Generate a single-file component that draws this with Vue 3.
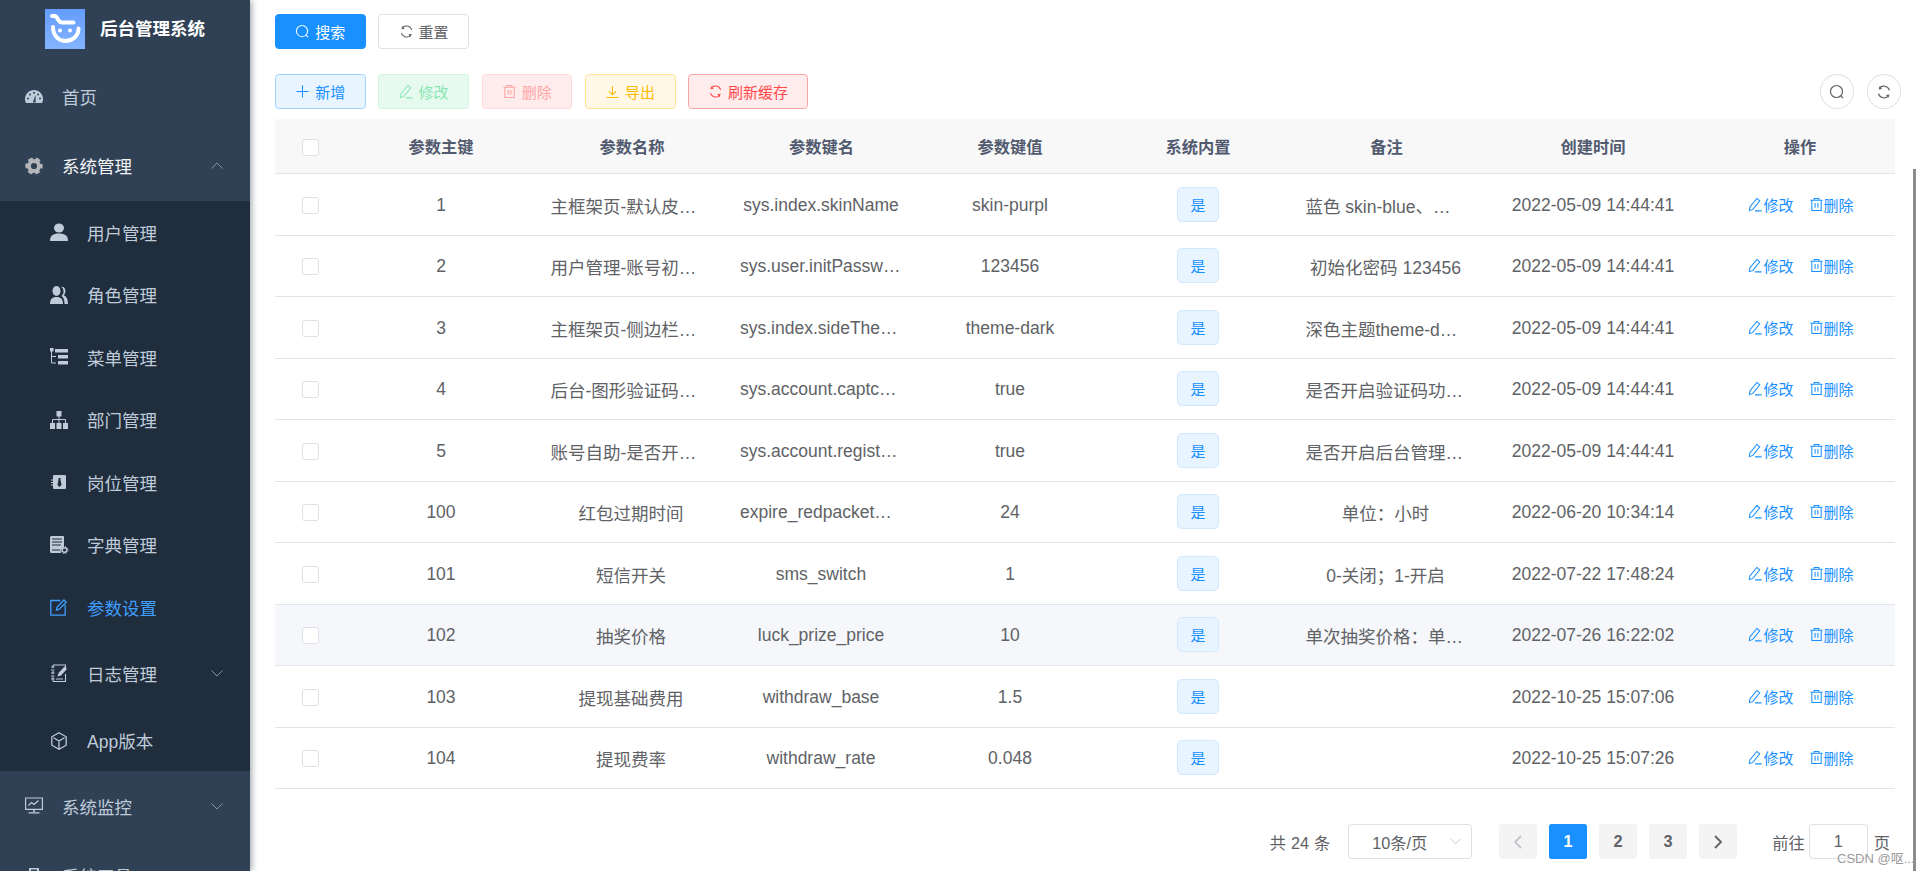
<script setup>
const BG = '#304156'
const DK = '#1f2d3d'
const icons = {
  dashboard: `<path fill="currentColor" d="M9 2C4 2 0 6 0 11c0 1.800.5 3 1.200 4h15.600c.7-1 1.200-2.200 1.200-4 0-5-4-9-9-9z"/><g fill="${BG}"><circle cx="3" cy="10.500" r="1"/><circle cx="5" cy="6.500" r="1"/><circle cx="9" cy="4.800" r="1"/><circle cx="13" cy="6.500" r="1"/><circle cx="15" cy="10.500" r="1"/><path d="M7.800 14.500 10.500 7l.2 7.500z"/></g>`,
  gear: `<circle cx="9" cy="9" r="5" fill="none" stroke="#b4b6b9" stroke-width="3.800"/><circle cx="9" cy="9" r="7.300" fill="none" stroke="#b4b6b9" stroke-width="2.800" stroke-dasharray="4.600 3.040" stroke-dashoffset="2.300"/>`,
  user: `<g fill="currentColor"><ellipse cx="9" cy="5" rx="5" ry="4.500"/><path d="M0 17.500c0-4.500 3-7 9-7s9 2.500 9 7c0 .3-.3.500-.6.500H.6c-.3 0-.6-.2-.6-.5z"/></g>`,
  peoples: `<g fill="currentColor"><ellipse cx="6.500" cy="5" rx="4" ry="5"/><path d="M0 18c0-4.500 2-7 6.500-7s6.500 2.500 6.500 7z"/><path d="M11 .8c2.500-.6 4.500 1.500 4.500 4.200 0 1.800-.8 3.200-1.800 4.300 2.500 1 4.300 3.700 4.300 8.700h-3.500c0-4-1-6.500-3-8 1.300-1.500 2.200-3 2-5-.1-1.800-1-3.200-2.500-4.200z"/></g>`,
  treeTable: `<g fill="currentColor"><rect x="0" y="0" width="3.500" height="3.500"/><rect x="5" y="1" width="13" height="3.500"/><rect x="8" y="7" width="10" height="3.500"/><rect x="8" y="13" width="10" height="3.500"/></g><path fill="none" stroke="currentColor" d="M1.500 3v12H6M1.500 8.500H6"/>`,
  tree: `<g fill="currentColor"><rect x="6.500" y="0" width="5" height="5.500"/><rect x="0" y="12" width="5" height="6"/><rect x="6.500" y="12" width="5" height="6"/><rect x="13" y="12" width="5" height="6"/></g><path fill="none" stroke="currentColor" d="M9 5v7M2.500 12V8.500h13V12"/>`,
  post: `<rect x="3" y="2" width="13" height="14" rx="1" fill="currentColor"/><path fill="${DK}" d="M8.500 5h2v1.500l1 5.500-2 2-2-2 1-5.500z"/><path fill="none" stroke="currentColor" d="M1 7h2M1 9.500h2M1 12h2"/>`,
  dict: `<path fill="currentColor" d="M1.500 0H13a1 1 0 0 1 1 1v10a5 5 0 0 0-3 6H1.500A1.500 1.500 0 0 1 0 15.500v-14A1.500 1.500 0 0 1 1.500 0z"/><path fill="none" stroke="${DK}" d="M2 3h10M2 6h10M2 9h9M2 14h8"/><circle cx="14.500" cy="14" r="2.300" fill="none" stroke="currentColor" stroke-width="1.400"/><circle cx="14.500" cy="14" r="3.500" fill="none" stroke="currentColor" stroke-dasharray="1.500 1.250"/>`,
  edit: `<path fill="none" stroke="currentColor" stroke-width="1.300" d="M10.500 2.500H.8v14.700h14.400V7M6.500 12l.6-3L14 2l2.200 2.200-7 7z"/>`,
  log: `<path fill="none" stroke="currentColor" stroke-width="1.100" d="M3 1h12.500v3M15.500 10v7.500H3M3 1v3M3 7v3M3 13v4.500M1 3h3.500M1 6h3.500M1 9h3.500M1 12h3.500M1 15h3.500"/><path fill="currentColor" d="M7.500 12.500l1-3.500 6-6.500 2.500 2.500-6 6.500zM6 14.500h7v1H6z"/>`,
  cube: `<path fill="none" stroke="currentColor" stroke-width="1.300" d="M9 .8l7.200 4v8.400L9 17.200l-7.200-4V4.800zM3.500 5.800 9 9l5.500-3.200M9 9v7.500"/>`,
  monitor: `<path fill="none" stroke="currentColor" stroke-width="1.200" d="M.6 1h16.800v11.400H.6zM3.500 8.500l3-3 2.500 2 4.500-4"/><path fill="currentColor" d="M8.200 12.500h1.600V15H8.200zM3.500 15.200h11v1.300h-11z"/>`,
  tool: `<path fill="currentColor" d="M4 2h10v3h4v13H0V5h4zm2 1.500V5h6V3.500z"/>`,
}
const top1 = [{ label: '首页', icon: 'dashboard' }]
const subs = [
  { label: '用户管理', icon: 'user' },
  { label: '角色管理', icon: 'peoples' },
  { label: '菜单管理', icon: 'treeTable' },
  { label: '部门管理', icon: 'tree' },
  { label: '岗位管理', icon: 'post' },
  { label: '字典管理', icon: 'dict' },
  { label: '参数设置', icon: 'edit', active: true },
]
const rows = [
  [1, '主框架页-默认皮肤样式名称', 'sys.index.skinName', 'skin-purpl', '蓝色 skin-blue、绿色 skin-green', '2022-05-09 14:44:41'],
  [2, '用户管理-账号初始密码', 'sys.user.initPassword', '123456', '初始化密码 123456', '2022-05-09 14:44:41'],
  [3, '主框架页-侧边栏主题', 'sys.index.sideTheme', 'theme-dark', '深色主题theme-dark，浅色主题theme-light', '2022-05-09 14:44:41'],
  [4, '后台-图形验证码功能开关', 'sys.account.captchaEnabled', 'true', '是否开启验证码功能（true开启）', '2022-05-09 14:44:41'],
  [5, '账号自助-是否开启用户注册功能', 'sys.account.registerUser', 'true', '是否开启后台管理用户注册功能', '2022-05-09 14:44:41'],
  [100, '红包过期时间', 'expire_redpacketMinutes', '24', '单位：小时', '2022-06-20 10:34:14'],
  [101, '短信开关', 'sms_switch', '1', '0-关闭；1-开启', '2022-07-22 17:48:24'],
  [102, '抽奖价格', 'luck_prize_price', '10', '单次抽奖价格：单位为元', '2022-07-26 16:22:02'],
  [103, '提现基础费用', 'withdraw_base', '1.5', '', '2022-10-25 15:07:06'],
  [104, '提现费率', 'withdraw_rate', '0.048', '', '2022-10-25 15:07:26'],
]
const heads = ['参数主键', '参数名称', '参数键名', '参数键值', '系统内置', '备注', '创建时间', '操作']
const colWidths = [70, 192, 190, 189, 188, 188, 189, 224, 190]
</script>

<template>
  <div class="app">
    <aside class="side">
      <div class="brand">
        <svg class="logo" viewBox="0 0 40 40" width="40" height="40">
          <defs>
            <linearGradient id="lg" x1="0" y1="0" x2="0" y2="1">
              <stop offset="0" stop-color="#649dff" />
              <stop offset="1" stop-color="#84b4ff" />
            </linearGradient>
          </defs>
          <rect width="40" height="40" fill="url(#lg)" />
          <path fill="none" stroke="#fff" stroke-width="4" stroke-linecap="round" d="M7 7h2.500c3.500 0 3 6.500 7.500 6.500h11.500" />
          <path fill="none" stroke="#fff" stroke-width="4" stroke-linecap="round" d="M8 18c0 8.500 5.500 14 12.500 14S33.500 27 33.500 19.500" />
          <circle cx="15" cy="21.500" r="2" fill="#fff" />
          <circle cx="25" cy="21.500" r="2" fill="#fff" />
        </svg>
        <span class="brand-name">后台管理系统</span>
      </div>
      <nav>
        <a v-for="m in top1" :key="m.label" class="item">
          <svg class="mi" viewBox="0 0 18 18" v-html="icons[m.icon]"></svg>
          <span>{{ m.label }}</span>
        </a>
        <a class="item open">
          <svg class="mi" viewBox="0 0 18 18" v-html="icons.gear"></svg>
          <span>系统管理</span>
          <svg class="chev" viewBox="0 0 12 7"><path d="M.5 6.500 6 1l5.500 5.500" /></svg>
        </a>
        <div class="sub">
          <a v-for="m in subs" :key="m.label" class="sub-item" :class="{ active: m.active }">
            <svg class="mi" viewBox="0 0 18 18" v-html="icons[m.icon]"></svg>
            <span>{{ m.label }}</span>
          </a>
          <a class="item nested">
            <svg class="mi" viewBox="0 0 18 18" v-html="icons.log"></svg>
            <span>日志管理</span>
            <svg class="chev" viewBox="0 0 12 7"><path d="M.5.5 6 6 11.500.5" /></svg>
          </a>
          <a class="sub-item last">
            <svg class="mi" viewBox="0 0 18 18" v-html="icons.cube"></svg>
            <span>App版本</span>
          </a>
        </div>
        <a class="item low">
          <svg class="mi" viewBox="0 0 18 18" v-html="icons.monitor"></svg>
          <span>系统监控</span>
          <svg class="chev" viewBox="0 0 12 7"><path d="M.5.5 6 6 11.500.5" /></svg>
        </a>
        <a class="item low">
          <svg class="mi" viewBox="0 0 18 18" v-html="icons.tool"></svg>
          <span>系统工具</span>
          <svg class="chev" viewBox="0 0 12 7"><path d="M.5.5 6 6 11.500.5" /></svg>
        </a>
      </nav>
    </aside>

    <main class="main">
      <div class="bar">
        <button class="btn primary">
          <svg class="bi" viewBox="0 0 16 16"><circle cx="7.500" cy="7.500" r="6" /><path d="m11.800 11.800 2.200 2.200" /></svg>
          搜索
        </button>
        <button class="btn">
          <svg class="bi" viewBox="0 0 16 16"><path d="M13.500 6.200A6 6 0 0 0 3.200 4.300" /><path d="M2.500 9.800a6 6 0 0 0 10.300 1.900" /><path class="fill" d="M3.800 2 2.500 5.500l3.500-.4zM12.200 14l1.300-3.500-3.500.4z" /></svg>
          重置
        </button>
      </div>

      <div class="bar toolbar">
        <div class="group">
          <button class="btn add">
            <svg class="bi" viewBox="0 0 16 16"><path d="M8 1.500v13M1.500 8h13" /></svg>
            新增
          </button>
          <button class="btn edit">
            <svg class="bi" viewBox="0 0 16 16"><path d="M1.500 14.500 2 10.500 9.500 1.500 12.500 4 5 13.500zM7.500 14.800h7" /></svg>
            修改
          </button>
          <button class="btn del">
            <svg class="bi" viewBox="0 0 16 16"><path d="M1.500 3.500h13M5.500 3.500v-2h5v2M3 3.500v11h10v-11M6.500 6.500v5M9.500 6.500v5" /></svg>
            删除
          </button>
          <button class="btn exp">
            <svg class="bi" viewBox="0 0 16 16"><path d="M8 2v9M4 7.500 8 11.500l4-4M1.500 14.500h13" /></svg>
            导出
          </button>
          <button class="btn ref">
            <svg class="bi" viewBox="0 0 16 16"><path d="M13.500 6.200A6 6 0 0 0 3.200 4.300" /><path d="M2.500 9.800a6 6 0 0 0 10.300 1.900" /><path class="fill" d="M3.800 2 2.500 5.500l3.500-.4zM12.200 14l1.300-3.500-3.500.4z" /></svg>
            刷新缓存
          </button>
        </div>
        <div class="tools">
          <button class="circle">
            <svg viewBox="0 0 16 16"><circle cx="7.500" cy="7.500" r="6" /><path d="m11.800 11.800 2.200 2.200" /></svg>
          </button>
          <button class="circle">
            <svg viewBox="0 0 16 16"><path d="M13.500 6.200A6 6 0 0 0 3.200 4.300" /><path d="M2.500 9.800a6 6 0 0 0 10.300 1.900" /><path class="fill" d="M3.800 2 2.500 5.500l3.500-.4zM12.200 14l1.300-3.500-3.500.4z" /></svg>
          </button>
        </div>
      </div>

      <table class="grid">
        <colgroup>
          <col v-for="(w, n) in colWidths" :key="n" :style="{ width: w + 'px' }" />
        </colgroup>
        <thead>
          <tr>
            <th><span class="check"></span></th>
            <th v-for="h in heads" :key="h">{{ h }}</th>
          </tr>
        </thead>
        <tbody>
          <tr v-for="(r, i) in rows" :key="r[0]" :class="{ hover: i === 7 }">
            <td><span class="check"></span></td>
            <td><div class="cell">{{ r[0] }}</div></td>
            <td class="shift"><div class="cell">{{ r[1] }}</div></td>
            <td class="key"><div class="cell">{{ r[2] }}</div></td>
            <td><div class="cell">{{ r[3] }}</div></td>
            <td><span class="tag">是</span></td>
            <td class="shift"><div class="cell">{{ r[4] }}</div></td>
            <td><div class="cell">{{ r[5] }}</div></td>
            <td>
              <div class="ops">
                <a class="op">
                  <svg class="oi" viewBox="0 0 16 16"><path d="M1.500 14.500 2 10.500 9.500 1.500 12.500 4 5 13.500zM7.500 14.800h7" /></svg>修改
                </a>
                <a class="op">
                  <svg class="oi" viewBox="0 0 16 16"><path d="M1.500 3.500h13M5.500 3.500v-2h5v2M3 3.500v11h10v-11M6.500 6.500v5M9.500 6.500v5" /></svg>删除
                </a>
              </div>
            </td>
          </tr>
        </tbody>
      </table>

      <div class="pager">
        <span class="total">共 24 条</span>
        <div class="select">
          <span>10条/页</span>
          <svg viewBox="0 0 12 7"><path d="M.5.5 6 6 11.500.5" /></svg>
        </div>
        <button class="page prev"><svg viewBox="0 0 10 16"><path d="M8 2 2 8l6 6" /></svg></button>
        <button class="page current">1</button>
        <button class="page">2</button>
        <button class="page">3</button>
        <button class="page next"><svg viewBox="0 0 10 16"><path d="m2 2 6 6-6 6" /></svg></button>
        <span class="jump">前往</span>
        <div class="input">1</div>
        <span class="unit">页</span>
      </div>
    </main>

    <div class="scrollbar"></div>
    <div class="mark">CSDN @呕...</div>
  </div>
</template>

<style scoped>
.app {
  display: flex;
  height: 871px;
  overflow: hidden;
  position: relative;
  background: #fff;
  font-family: "Liberation Sans", "Noto Sans CJK SC", sans-serif;
  color: #606266;
}
.side {
  flex: none;
  width: 250px;
  background: #304156;
  box-shadow: 2px 0 6px rgba(0, 21, 41, 0.35);
  overflow: hidden;
  position: relative;
  z-index: 2;
  color: #bfcbd9;
  font-size: 17.5px;
}
.brand {
  height: 62px;
  padding: 9px 0 0 45px;
  box-sizing: border-box;
  display: flex;
  align-items: flex-start;
  gap: 15px;
}
.logo {
  flex: none;
}
.brand-name {
  color: #fff;
  font-weight: 700;
  font-size: 17.5px;
  line-height: 40px;
}
.item,
.sub-item {
  display: flex;
  align-items: center;
  box-sizing: border-box;
}
.item {
  height: 69px;
  padding: 0 27px 0 25px;
}
.item.open {
  height: 70px;
  padding-bottom: 1px;
  color: #f4f4f5;
}
.item.low {
  padding-top: 1px;
}
.item.nested {
  padding-left: 50px;
}
.sub {
  background: #1f2d3d;
}
.sub-item {
  height: 62.5px;
  padding-left: 50px;
}
.sub-item.last {
  height: 63.5px;
  padding-top: 3px;
}
.sub-item.active {
  color: #409eff;
}
.mi {
  flex: none;
  width: 18px;
  height: 18px;
  margin-right: 19px;
  overflow: visible;
}
.chev {
  flex: none;
  width: 12px;
  height: 7px;
  margin-left: auto;
  fill: none;
  stroke: #8692a0;
  stroke-width: 1;
}
.main {
  flex: 1;
  min-width: 0;
  box-sizing: border-box;
  padding: 14px 24px 0 25px;
}
.bar {
  display: flex;
  gap: 12.5px;
}
.toolbar {
  margin-top: 25px;
  justify-content: space-between;
}
.group {
  display: flex;
  gap: 12.5px;
}
.btn {
  box-sizing: border-box;
  height: 35px;
  min-width: 90.75px;
  padding: 0 19px;
  border: 1px solid #dcdfe6;
  border-radius: 3.75px;
  background: #fff;
  color: #606266;
  font: inherit;
  font-size: 15px;
  display: flex;
  align-items: center;
  justify-content: center;
  gap: 5px;
}
.bi {
  width: 15px;
  height: 15px;
  fill: none;
  stroke: currentColor;
  stroke-width: 1.100;
}
.fill {
  fill: currentColor;
  stroke: none;
}
.btn.primary {
  background: #1890ff;
  border-color: #1890ff;
  color: #fff;
}
.btn.add {
  background: #e8f4ff;
  border-color: #a3d3ff;
  color: #1890ff;
}
.btn.edit {
  background: #e7faf0;
  border-color: #d0f5e0;
  color: #89e6b3;
}
.btn.del {
  background: #ffeded;
  border-color: #ffdbdb;
  color: #ffa4a4;
}
.btn.exp {
  background: #fff8e6;
  border-color: #ffe399;
  color: #ffba00;
}
.btn.ref {
  background: #ffeded;
  border-color: #ffa4a4;
  color: #ff4949;
}
.tools {
  display: flex;
  gap: 13px;
  margin-right: -6px;
}
.circle {
  box-sizing: border-box;
  width: 34px;
  height: 35px;
  border: 1px solid #dcdfe6;
  border-radius: 50%;
  background: #fff;
  padding: 0;
  display: flex;
  align-items: center;
  justify-content: center;
  color: #606266;
}
.circle svg {
  width: 16px;
  height: 16px;
  fill: none;
  stroke: currentColor;
  stroke-width: 1.200;
}
.grid {
  width: 1620px;
  margin-top: 10px;
  table-layout: fixed;
  border-collapse: separate;
  border-spacing: 0;
  font-size: 17.5px;
}
th {
  height: 55px;
  box-sizing: border-box;
  padding: 0 12.5px;
  background: #f8f8f9;
  border-bottom: 1px solid #dfe6ec;
  color: #515a6e;
  font-size: 16.25px;
  font-weight: 700;
  text-align: center;
}
td {
  height: 61.5px;
  box-sizing: border-box;
  padding: 0 14.5px;
  border-bottom: 1px solid #dfe6ec;
  text-align: center;
}
td.shift {
  padding: 0 15.5px 0 13.5px;
}
td.key {
  padding: 0 14px 0 13px;
}
tr.hover td {
  background: #f5f7fa;
}
.cell {
  padding-top: 2px;
  overflow: hidden;
  white-space: nowrap;
  text-overflow: ellipsis;
}
.check {
  display: inline-block;
  vertical-align: middle;
  box-sizing: border-box;
  width: 17px;
  height: 17px;
  border: 1px solid #dcdfe6;
  border-radius: 2.5px;
  background: #fff;
}
.tag {
  display: inline-flex;
  vertical-align: middle;
  align-items: center;
  justify-content: center;
  box-sizing: border-box;
  width: 42px;
  height: 35px;
  border: 1px solid #d1e9ff;
  border-radius: 5px;
  background: #e8f4ff;
  color: #1890ff;
  font-size: 15px;
}
.ops {
  display: flex;
  justify-content: center;
  gap: 15px;
  padding-left: 2px;
}
.op {
  display: inline-flex;
  align-items: center;
  color: #1890ff;
  font-size: 15px;
  white-space: nowrap;
}
.oi {
  width: 15px;
  height: 15px;
  margin-right: 0;
  fill: none;
  stroke: currentColor;
  stroke-width: 1.100;
}
.pager {
  display: flex;
  align-items: center;
  justify-content: flex-end;
  height: 35px;
  margin-top: 35px;
  padding-right: 5px;
  font-size: 16.25px;
}
.total {
  margin-right: 18px;
  word-spacing: 0.5px;
}
.select {
  box-sizing: border-box;
  width: 124px;
  height: 35px;
  border: 1px solid #dcdfe6;
  border-radius: 3.75px;
  display: flex;
  align-items: center;
  padding: 0 10px 0 23px;
  justify-content: space-between;
}
.select svg {
  width: 11px;
  height: 7px;
  fill: none;
  stroke: #c0c4cc;
}
.page {
  box-sizing: border-box;
  width: 37.5px;
  height: 35px;
  margin-left: 12.5px;
  border: 0;
  border-radius: 2.5px;
  background: #f4f4f5;
  color: #606266;
  font: inherit;
  font-weight: 700;
  padding: 0;
  display: flex;
  align-items: center;
  justify-content: center;
}
.page svg {
  width: 10px;
  height: 16px;
  fill: none;
  stroke: currentColor;
  stroke-width: 1.800;
}
.page.prev {
  margin-left: 27px;
  color: #c0c4cc;
}
.page.current {
  background: #1890ff;
  color: #fff;
}
.jump {
  margin-left: 35.5px;
}
.input {
  box-sizing: border-box;
  width: 59px;
  height: 35px;
  margin: 0 6px 0 4px;
  border: 1px solid #dcdfe6;
  border-radius: 3.75px;
  display: flex;
  align-items: center;
  justify-content: center;
}
.scrollbar {
  position: absolute;
  left: 1913px;
  top: 169px;
  bottom: 0;
  width: 3px;
  background: #8c8c8c;
}
.mark {
  position: absolute;
  left: 1837px;
  top: 851px;
  font-size: 13px;
  line-height: 16px;
  color: #9a9a9a;
  text-shadow: 0 0 2px #fff;
  white-space: nowrap;
}
</style>

<style>
html,
body {
  margin: 0;
  overflow: hidden;
}
</style>
